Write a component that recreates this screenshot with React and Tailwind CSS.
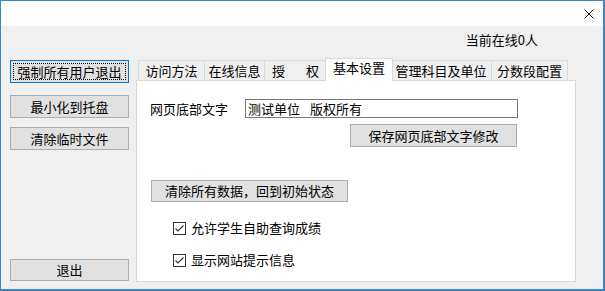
const Btn = ({ children, className = "", focused = false }) => {
  return (
    <div
      className={`relative flex items-center justify-center bg-[#e1e1e1] border ${
        focused ? "border-[#0078d7]" : "border-[#adadad]"
      } text-[13px] leading-[14px] text-black ${className}`}
    >
      {focused && <span className="absolute inset-[2px] border border-dotted border-black"></span>}
      <span>{children}</span>
    </div>
  );
};

const Check = ({ label, className = "" }) => {
  return (
    <div className={`flex items-center h-[14px] gap-[5px] ${className}`}>
      <svg width="13" height="13" viewBox="0 0 13 13" className="block">
        <rect x="0.5" y="0.5" width="12" height="12" fill="#fff" stroke="#333" />
        <polyline points="2.5,6.5 5,9 10.5,3.5" fill="none" stroke="#333" strokeWidth="1.2" />
      </svg>
      <span className="text-[13px] leading-[14px]">{label}</span>
    </div>
  );
};

const Tab = ({ children, w, selected = false }) => {
  if (selected) {
    return (
      <div
        className={`relative z-10 -mx-[2px] -mb-px flex h-[23px] items-start justify-center border border-b-0 border-[#d9d9d9] bg-white pt-[2px] text-[13px] leading-[14px] ${w}`}
      >
        {children}
      </div>
    );
  }
  return (
    <div
      className={`flex h-[20px] items-center justify-center border border-b-0 border-[#d9d9d9] bg-[#f0f0f0] -ml-px first:ml-0 text-[13px] leading-[14px] ${w}`}
    >
      {children}
    </div>
  );
};

export default function App() {
  return (
    <div className="w-[605px] h-[291px] flex flex-col border-t border-l border-r-2 border-b-2 border-[#3d85c0] font-['Noto_Sans_CJK_SC',sans-serif] text-black">
      <div className="h-[25px] bg-white flex justify-end pr-[9px] pt-[8px]">
        <svg width="10" height="10" viewBox="0 0 10 10">
          <path d="M0.5 0.5 L9.5 9.5 M9.5 0.5 L0.5 9.5" stroke="#000" strokeWidth="1" />
        </svg>
      </div>
      <div className="flex-1 bg-[#f0f0f0] flex flex-col">
        <div className="h-[32px] flex justify-end pr-[65px] pt-[7px]">
          <span className="text-[13px] leading-[14px]">当前在线0人</span>
        </div>
        <div className="flex-1 flex">
          <div className="w-[135px] pl-[9px] flex flex-col">
            <Btn focused className="mt-[2px] w-[119px] h-[23px]">强制所有用户退出</Btn>
            <Btn className="mt-[12px] w-[119px] h-[23px]">最小化到托盘</Btn>
            <Btn className="mt-[9px] w-[119px] h-[23px]">清除临时文件</Btn>
            <div className="flex-1"></div>
            <Btn className="mb-[8px] w-[119px] h-[22px]">退出</Btn>
          </div>
          <div className="w-[440px] mb-[7px] flex flex-col">
            <div className="h-[22px] flex items-end pl-[2px]">
              <Tab w="w-[67px]">访问方法</Tab>
              <Tab w="w-[61px]">在线信息</Tab>
              <Tab w="w-[63px]">
                <span>授</span>
                <span className="ml-[21px]">权</span>
              </Tab>
              <Tab selected w="w-[68px]">基本设置</Tab>
              <Tab w="w-[102px]">管理科目及单位</Tab>
              <Tab w="w-[77px]">分数段配置</Tab>
            </div>
            <div className="flex-1 bg-white border border-[#d9d9d9] flex flex-col items-start pl-[13px] pt-[18px]">
              <div className="flex items-center h-[19px]">
                <span className="w-[95px] text-[13px] leading-[14px]">网页底部文字</span>
                <div className="w-[273px] h-[19px] border border-[#7a7a7a] bg-white flex items-center pl-[2px] text-[13px] leading-[14px] [word-spacing:7px]">
                  测试单位 版权所有
                </div>
              </div>
              <Btn className="mt-[6px] ml-[200px] w-[167px] h-[23px]">保存网页底部文字修改</Btn>
              <Btn className="mt-[33px] ml-px w-[197px] h-[22px]">清除所有数据，回到初始状态</Btn>
              <Check className="mt-[19px] ml-[23px]" label="允许学生自助查询成绩" />
              <Check className="mt-[18px] ml-[23px]" label="显示网站提示信息" />
            </div>
          </div>
        </div>
      </div>
    </div>
  );
}
